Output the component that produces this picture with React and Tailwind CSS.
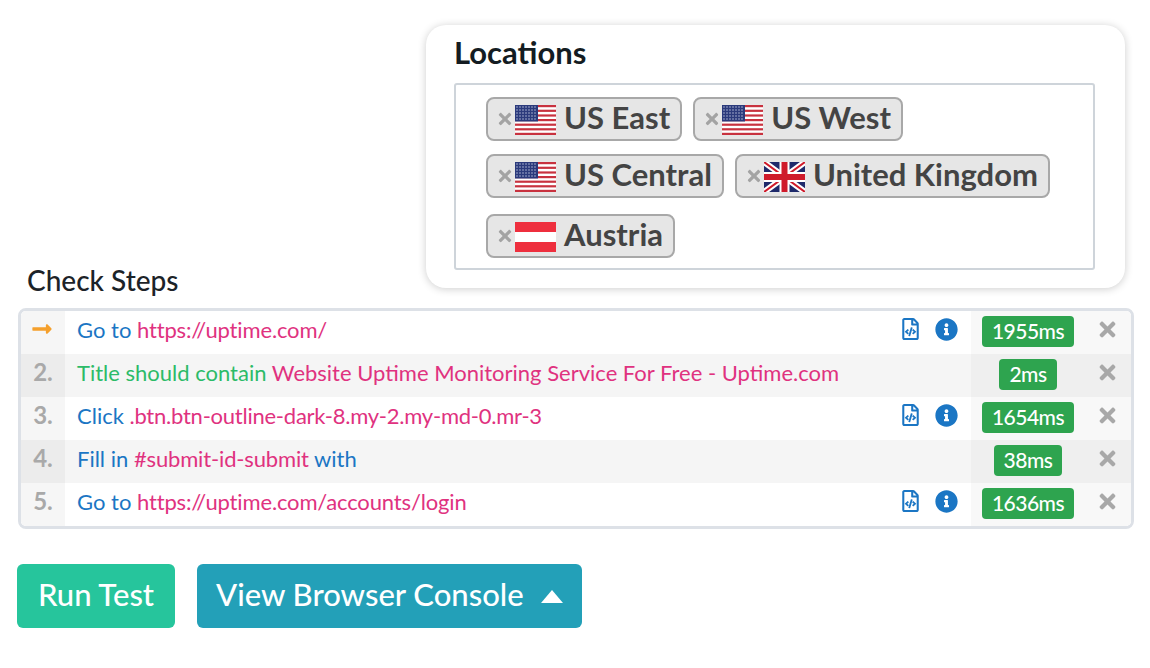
import React from "react";
import { FaRegFileCode, FaInfoCircle, FaTimes, FaLongArrowAltRight } from "react-icons/fa";

const font = "font-['Lato','Noto_Sans',sans-serif]";

const UsFlag = () => (
    <svg width="41" height="30" viewBox="0 0 41 30" className="shrink-0 ml-px mt-px">
        <rect width="41" height="30" fill="#fff" />
        {[0, 4.7, 9.4, 14, 18.6, 23.2, 27.8].map((y) => (
            <rect key={y} x="0" y={y} width="41" height="2.2" fill="#c8323f" />
        ))}
        <rect width="23" height="16.5" fill="#2b3a7c" />
        {[2, 5, 8, 11, 14].map((y) =>
            [2, 5, 8, 11, 14, 17, 20].map((x) => (
                <circle key={x + "-" + y} cx={x} cy={y} r="0.7" fill="#c9d0e6" />
            ))
        )}
    </svg>
);

const UkFlag = () => (
    <svg width="41" height="30" viewBox="0 0 41 30" className="shrink-0 ml-px mt-px">
        <rect width="41" height="30" fill="#1f2a6b" />
        <path d="M0 0L41 30M41 0L0 30" stroke="#fff" strokeWidth="6" />
        <path d="M0 0L41 30M41 0L0 30" stroke="#cf1b2b" strokeWidth="2" />
        <path d="M20.5 0V30M0 15H41" stroke="#fff" strokeWidth="10" />
        <path d="M20.5 0V30M0 15H41" stroke="#cf1b2b" strokeWidth="6" />
    </svg>
);

const AtFlag = () => (
    <svg width="41" height="30" viewBox="0 0 41 30" className="shrink-0 ml-px mt-px">
        <rect width="41" height="30" fill="#fff" />
        <rect width="41" height="10" fill="#ee2f3e" />
        <rect y="20" width="41" height="10" fill="#ee2f3e" />
    </svg>
);

const locationRows = [
    { margin: "", chips: [{ name: "US East", Flag: UsFlag }, { name: "US West", Flag: UsFlag }] },
    { margin: "mt-[13px]", chips: [{ name: "US Central", Flag: UsFlag }, { name: "United Kingdom", Flag: UkFlag }] },
    { margin: "mt-[16px]", chips: [{ name: "Austria", Flag: AtFlag }] },
];

const blue = "text-[#1b76c4]";
const pink = "text-[#e0327f]";

const steps = [
    { num: null, parts: [["Go to ", blue], ["https://uptime.com/", pink + " tracking-[-0.15px]"]], icons: true, time: "1955ms" },
    { num: "2.", parts: [["Title should contain ", "text-[#2cbb68]"], ["Website Uptime Monitoring Service For Free - Uptime.com", pink]], icons: false, time: "2ms" },
    { num: "3.", parts: [["Click ", blue], [".btn.btn-outline-dark-8.my-2.my-md-0.mr-3", pink + " tracking-[-0.24px]"]], icons: true, time: "1654ms" },
    { num: "4.", parts: [["Fill in ", blue], ["#submit-id-submit", pink + " tracking-[-0.15px]"], [" with", blue]], icons: false, time: "38ms" },
    { num: "5.", parts: [["Go to ", blue], ["https://uptime.com/accounts/login", pink + " tracking-[-0.15px]"]], icons: true, time: "1636ms" },
];

const Chip = ({ name, Flag }) => (
    <div className="h-[44px] flex items-center pl-[8px] pr-[10px] bg-[#e6e6e6] border-2 border-[#a8a8a8] rounded-lg">
        <FaTimes className="text-[#a3a3a3] w-[18px] h-[18px] shrink-0" />
        <Flag />
        <span className="ml-[8px] mb-[3px] text-[31px] leading-none font-bold text-[#444444] whitespace-nowrap">{name}</span>
    </div>
);

const StepRow = ({ step, index }) => {
    const even = index % 2 === 1;
    return (
        <div className={`h-[43px] flex items-center ${even ? "bg-[#f5f5f5]" : "bg-white"}`}>
            <div className={`w-[44px] h-full pb-[7px] flex items-center justify-center shrink-0 text-[24px] font-bold text-[#a9a9a9] ${even ? "bg-[#ececec]" : "bg-[#f6f6f6]"}`}>
                {step.num ? step.num : <FaLongArrowAltRight className="text-[#f5a02c] w-[22px] h-[22px] mr-[2px]" />}
            </div>
            <div className="flex-1 pl-[12px] pb-[7px] text-[22px] whitespace-nowrap">
                {step.parts.map(([text, color]) => (
                    <span key={text} className={color}>{text}</span>
                ))}
            </div>
            {step.icons && (
                <div className="flex items-center gap-[16px] mr-[13px] pb-[7px] text-[#1b76c4]">
                    <FaRegFileCode className="w-[17px] h-[22px]" />
                    <FaInfoCircle className="w-[23px] h-[23px]" />
                </div>
            )}
            <div className={`w-[160px] h-full flex items-center shrink-0 ${even ? "bg-[#efefef]" : "bg-[#f8f8f8]"}`}>
                <div className="w-[114px] pb-[2px] flex justify-center">
                    <span className="h-[31px] px-[10px] pb-[2px] flex items-center bg-[#2ea44f] text-white text-[21px] font-medium tracking-[-0.5px] rounded">{step.time}</span>
                </div>
                <FaTimes className="text-[#a8a8a8] w-[23px] h-[23px] ml-[11px] mb-[7px]" />
            </div>
        </div>
    );
};

export default function App() {
    return (
        <div className={`w-[1150px] h-[668px] bg-white overflow-hidden ${font}`}>
            <div className="flex justify-between items-end pt-[25px] pl-[27px] pr-[25px]">
                <h3 className="text-[28px] leading-[30px] mb-px font-medium text-[#1c2328]">Check Steps</h3>
                <div className="w-[699px] h-[263px] mb-[8px] bg-white rounded-[20px] shadow-[0_1px_8px_rgba(0,0,0,0.2)] pt-[9px] px-[28px]">
                    <h2 className="text-[31px] leading-[36px] font-bold text-[#141c22]">Locations</h2>
                    <div className="mt-[13px] w-[641px] h-[187px] border-2 border-[#ced4da] rounded-[3px] pt-[12px] pl-[30px]">
                        {locationRows.map((row) => (
                            <div key={row.chips[0].name} className={`flex gap-[11px] ${row.margin}`}>
                                {row.chips.map((chip) => (
                                    <Chip key={chip.name} name={chip.name} Flag={chip.Flag} />
                                ))}
                            </div>
                        ))}
                    </div>
                </div>
            </div>
            <div className="mt-[12px] ml-[18px] w-[1116px] border-[3px] border-[#dde1e7] rounded-lg overflow-hidden">
                {steps.map((step, i) => (
                    <StepRow key={i} step={step} index={i} />
                ))}
            </div>
            <div className="flex gap-[22px] mt-[35px] ml-[17px]">
                <button className="w-[158px] h-[64px] pb-[4px] rounded-md bg-[#26c59c] text-white text-[31px] font-medium">Run Test</button>
                <button className="w-[385px] h-[64px] rounded-md bg-[#23a0b8] text-white text-[31px] font-medium flex items-center pl-[19px]">
                    <span className="mb-[4px]">View Browser Console</span>
                    <svg width="22" height="13" viewBox="0 0 22 13" className="ml-[17px]">
                        <path d="M11 0L22 13H0Z" fill="#fff" />
                    </svg>
                </button>
            </div>
        </div>
    );
}
